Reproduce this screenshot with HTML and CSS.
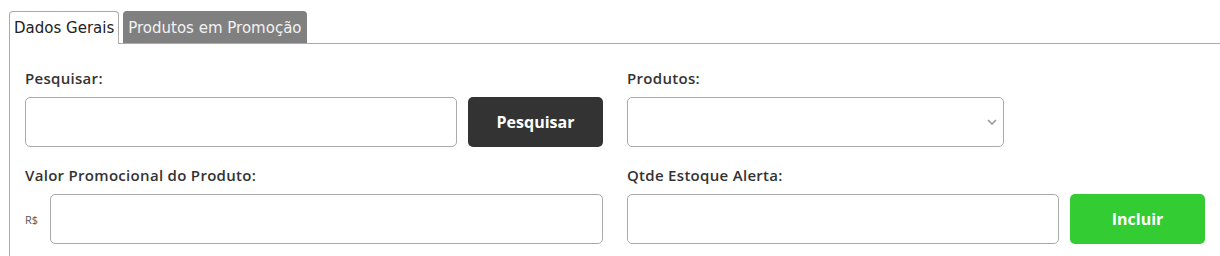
FILE: index.html
```html
<!DOCTYPE html>
<html lang="pt-BR">
<head>
<meta charset="utf-8">
<title>Produtos em Promoção</title>
<link rel="stylesheet" href="styles.css">
</head>
<body>
<div class="page">
  <ul class="tabs">
    <li class="tab tab-active">Dados Gerais</li>
    <li class="tab tab-inactive">Produtos em Promoção</li>
  </ul>
  <div class="panel">
    <div class="grid">
      <div class="group">
        <label class="label">Pesquisar:</label>
        <div class="row">
          <input class="field field-grow" type="text">
          <button class="btn btn-dark">Pesquisar</button>
        </div>
      </div>
      <div class="group">
        <label class="label">Produtos:</label>
        <div class="select-wrap">
          <select class="field select"><option></option></select>
          <svg class="chevron" width="10" height="6" viewBox="0 0 10 6"><path d="M1 1 L5 5 L9 1" fill="none" stroke="#999" stroke-width="1.6"/></svg>
        </div>
      </div>
      <div class="group">
        <label class="label">Valor Promocional do Produto:</label>
        <div class="row">
          <span class="currency">R$</span>
          <input class="field field-grow" type="text">
        </div>
      </div>
      <div class="group">
        <label class="label">Qtde Estoque Alerta:</label>
        <div class="row">
          <input class="field field-grow" type="text">
          <button class="btn btn-green">Incluir</button>
        </div>
      </div>
    </div>
  </div>
</div>
</body>
</html>
```
FILE: styles.css
```css
* { box-sizing: border-box; }
html, body { margin: 0; padding: 0; background: #fff; }
body { font-family: "Open Sans", "Liberation Sans", sans-serif; }

.page { padding: 11px 0 0 9px; }

.tabs {
  list-style: none;
  margin: 0;
  padding: 0;
  display: flex;
  gap: 4px;
}
.tab {
  height: 32px;
  line-height: 32px;
  padding: 0 4px;
  font-family: "DejaVu Sans", Verdana, sans-serif;
  font-size: 15px;
  border: 1px solid #aaa;
  border-bottom: none;
  border-radius: 4px 4px 0 0;
}
.tab-active { background: #fff; color: #222; height: 33px; margin-bottom: -1px; position: relative; }
.tab-inactive { background: #808080; border-color: #808080; color: #f2f2f2; }

.panel {
  border-top: 1px solid #aaa;
  border-left: 1px solid #aaa;
  padding: 24px 15px 20px 15px;
  height: 213px;
}

.grid {
  display: grid;
  grid-template-columns: 578px 578px;
  column-gap: 24px;
  row-gap: 18px;
}

.label {
  display: block;
  font-size: 15px;
  letter-spacing: 0.3px;
  font-weight: 600;
  line-height: 21px;
  color: #333;
  margin-bottom: 8px;
}

.row { display: flex; align-items: center; gap: 11px; }

.field {
  height: 50px;
  border: 1px solid #aaa;
  border-radius: 5px;
  background: #fff;
  font-size: 14px;
  padding: 0 10px;
  outline: none;
}
.field-grow { flex: 1; min-width: 0; }

.select-wrap { position: relative; width: 377px; }
.select {
  width: 100%;
  appearance: none;
  -webkit-appearance: none;
}
.chevron { position: absolute; right: 7px; top: 22px; }

.currency { font-size: 11px; color: #555; width: 14px; }

.btn {
  width: 135px;
  height: 50px;
  border: none;
  border-radius: 5px;
  color: #fff;
  font-family: "Open Sans", "Liberation Sans", sans-serif;
  font-weight: 700;
  font-size: 16px;
  cursor: pointer;
}
.btn-dark { background: #333; }
.btn-green { background: #33cc33; }
```
